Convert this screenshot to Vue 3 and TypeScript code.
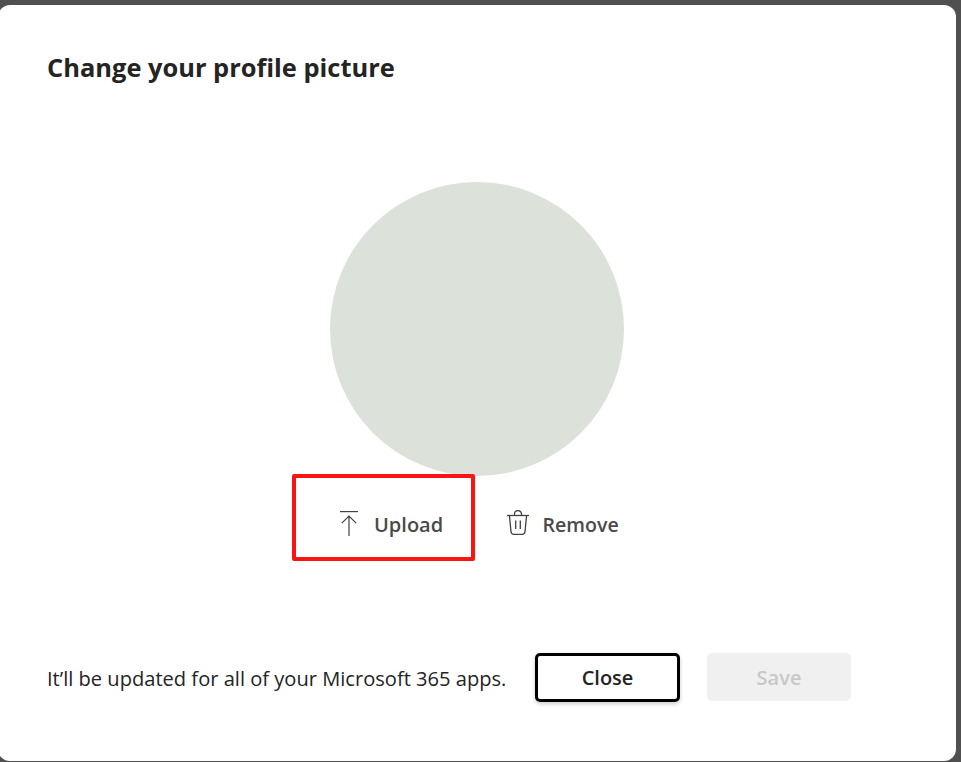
<script setup lang="ts">
const title: string = 'Change your profile picture'
</script>

<template>
  <div class="page">
    <section class="dialog">
      <h1 class="title">{{ title }}</h1>
      <div class="avatar"></div>
      <div class="actions">
        <button class="action upload">
          <svg class="icon" width="24" height="28" viewBox="0 0 24 28" fill="none" stroke="#424242" stroke-width="1.2">
            <path d="M3 2.6H21" />
            <path d="M12 27V7M4.8 14.2 12 7l7.2 7.2" />
          </svg>
          <span class="label">Upload</span>
        </button>
        <button class="action remove">
          <svg class="icon" width="24" height="26" viewBox="0 0 24 26" fill="none" stroke="#424242" stroke-width="1.3">
            <path d="M1 5.5H23" />
            <path d="M8.5 5.5V4a3.5 3.5 0 0 1 7 0v1.5" />
            <path d="M3.4 5.5 5 21.5A3 3 0 0 0 8 24.3h8a3 3 0 0 0 3-2.8l1.6-16" />
            <path d="M9.7 10.5V19M14.3 10.5V19" />
          </svg>
          <span class="label">Remove</span>
        </button>
      </div>
      <footer class="footer">
        <p class="note">It’ll be updated for all of your Microsoft 365 apps.</p>
        <button class="btn close">Close</button>
        <button class="btn save" disabled>Save</button>
      </footer>
    </section>
  </div>
</template>

<style>
html, body { margin: 0; background: #505050; }
</style>

<style scoped>
.page {
  width: 961px;
  height: 762px;
  overflow: hidden;
  background: #505050;
  font-family: "Open Sans", "Noto Sans", sans-serif;
}
.dialog {
  box-sizing: border-box;
  width: 958px;
  height: 756px;
  margin: 5px 0 0 -2px;
  padding: 44px 0 0 49px;
  background: #fff;
  border-radius: 12px;
  display: flex;
  flex-direction: column;
}
.title {
  margin: 0;
  font-size: 25.45px;
  line-height: 36px;
  font-weight: 700;
  color: #242424;
}
.avatar {
  width: 294px;
  height: 294px;
  margin: 97px 0 0 283px;
  border-radius: 50%;
  background: #dce1d9;
}
.actions {
  display: flex;
  align-items: flex-start;
  margin: -2px 0 0 245px;
}
.action {
  display: flex;
  align-items: center;
  border: 0;
  background: transparent;
  padding: 10px 0 0;
  font: inherit;
  font-size: 20px;
  font-weight: 600;
  color: #4a4a4a;
}
.label { margin-top: 4px; }
.upload {
  box-sizing: border-box;
  width: 183px;
  height: 87px;
  border: 4px solid #fa1414;
  border-radius: 2px;
  padding: 10px 0 0 41px;
  gap: 13px;
}
.remove {
  height: 87px;
  margin-left: 31px;
  gap: 12.5px;
  font-size: 19.6px;
}
.icon { flex: none; }
.footer {
  display: flex;
  align-items: flex-start;
  margin-top: 92px;
}
.note {
  margin: 0;
  width: 488px;
  padding-top: 2px;
  font-size: 20.1px;
  line-height: 48px;
  color: #242424;
}
.btn {
  box-sizing: border-box;
  height: 48px;
  border-radius: 5px;
  font: inherit;
  font-size: 20px;
  font-weight: 600;
  padding: 0;
}
.close {
  width: 145px;
  height: 49px;
  border: 3px solid #000;
  background: #fff;
  color: #242424;
  box-shadow: 0 2px 4px rgba(0, 0, 0, 0.2);
}
.save {
  width: 144px;
  margin-left: 27px;
  border: 0;
  background: #f0f0f0;
  color: #c8c8c8;
}
</style>
